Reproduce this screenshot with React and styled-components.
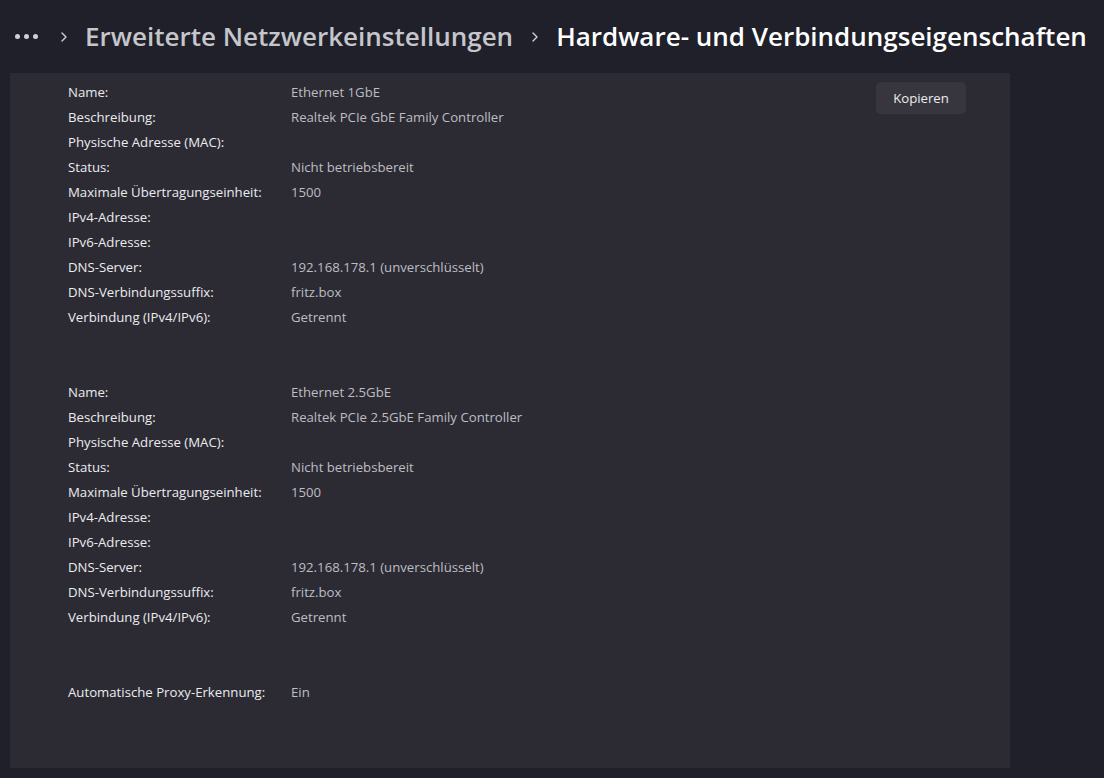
import React from "react";
import styled, { createGlobalStyle } from "styled-components";

const GlobalStyle = createGlobalStyle`
  body {
    margin: 0;
    background: #20202a;
    font-family: "Open Sans", "Noto Sans", sans-serif;
    -webkit-font-smoothing: antialiased;
  }
`;

const Page = styled.div`
  width: 1104px;
  height: 778px;
  background: #20202a;
  overflow: hidden;
`;

const Breadcrumb = styled.div`
  display: flex;
  align-items: center;
  height: 72px;
  padding-left: 15px;
  white-space: nowrap;
`;

const Dots = styled.span`
  display: flex;
  gap: 4px;
  margin-right: 20px;
  & > i {
    width: 5px;
    height: 5px;
    border-radius: 50%;
    background: #d0d0d4;
  }
`;

const Chevron = styled.svg`
  width: 12px;
  height: 12px;
  margin: 1px 15px 0 0;
  flex: none;
`;

const Crumb = styled.span`
  font-size: 26px;
  font-weight: 600;
  color: ${(p) => (p.$current ? "#ffffff" : "#c6c6ca")};
  margin-right: ${(p) => (p.$current ? "0" : "16px")};
`;

const Panel = styled.div`
  display: flex;
  margin: 1px 0 0 10px;
  width: 1000px;
  height: 695px;
  box-sizing: border-box;
  padding: 6px 44px 0 58px;
  background: #2c2b34;
`;

const Details = styled.div`
  flex: 1;
  display: flex;
  flex-direction: column;
`;

const Group = styled.div`
  display: grid;
  grid-template-columns: 223px 1fr;
  grid-auto-rows: 25px;
  align-items: center;
  margin-bottom: ${(p) => (p.$last ? "0" : "50px")};
`;

const Label = styled.div`
  font-size: 13.2px;
  color: #ebebee;
`;

const Value = styled.div`
  font-size: 13.2px;
  color: #bdbdc2;
`;

const CopyButton = styled.button`
  align-self: flex-start;
  margin-top: 3px;
  width: 90px;
  height: 32px;
  border: none;
  border-radius: 5px;
  background: #37363e;
  color: #ececee;
  font-family: "Open Sans", "Noto Sans", sans-serif;
  font-size: 13.2px;
  cursor: pointer;
`;

const adapters = [
  {
    name: "Ethernet 1GbE",
    desc: "Realtek PCIe GbE Family Controller",
  },
  {
    name: "Ethernet 2.5GbE",
    desc: "Realtek PCIe 2.5GbE Family Controller",
  },
];

const rowsFor = (a) => [
  ["Name:", a.name],
  ["Beschreibung:", a.desc],
  ["Physische Adresse (MAC):", ""],
  ["Status:", "Nicht betriebsbereit"],
  ["Maximale Übertragungseinheit:", "1500"],
  ["IPv4-Adresse:", ""],
  ["IPv6-Adresse:", ""],
  ["DNS-Server:", "192.168.178.1 (unverschlüsselt)"],
  ["DNS-Verbindungssuffix:", "fritz.box"],
  ["Verbindung (IPv4/IPv6):", "Getrennt"],
];

const ChevronIcon = () => (
  <Chevron viewBox="0 0 12 12">
    <path d="M4 2l4 4-4 4" fill="none" stroke="#d0d0d4" strokeWidth="1.4" strokeLinecap="round" strokeLinejoin="round" />
  </Chevron>
);

export default function App() {
  return (
    <Page>
      <GlobalStyle />
      <Breadcrumb>
        <Dots>
          <i />
          <i />
          <i />
        </Dots>
        <ChevronIcon />
        <Crumb>Erweiterte Netzwerkeinstellungen</Crumb>
        <ChevronIcon />
        <Crumb $current>Hardware- und Verbindungseigenschaften</Crumb>
      </Breadcrumb>
      <Panel>
        <Details>
          {adapters.map((a) => (
            <Group key={a.name}>
              {rowsFor(a).map(([l, v]) => (
                <React.Fragment key={l}>
                  <Label>{l}</Label>
                  <Value>{v}</Value>
                </React.Fragment>
              ))}
            </Group>
          ))}
          <Group $last>
            <Label>Automatische Proxy-Erkennung:</Label>
            <Value>Ein</Value>
          </Group>
        </Details>
        <CopyButton>Kopieren</CopyButton>
      </Panel>
    </Page>
  );
}
